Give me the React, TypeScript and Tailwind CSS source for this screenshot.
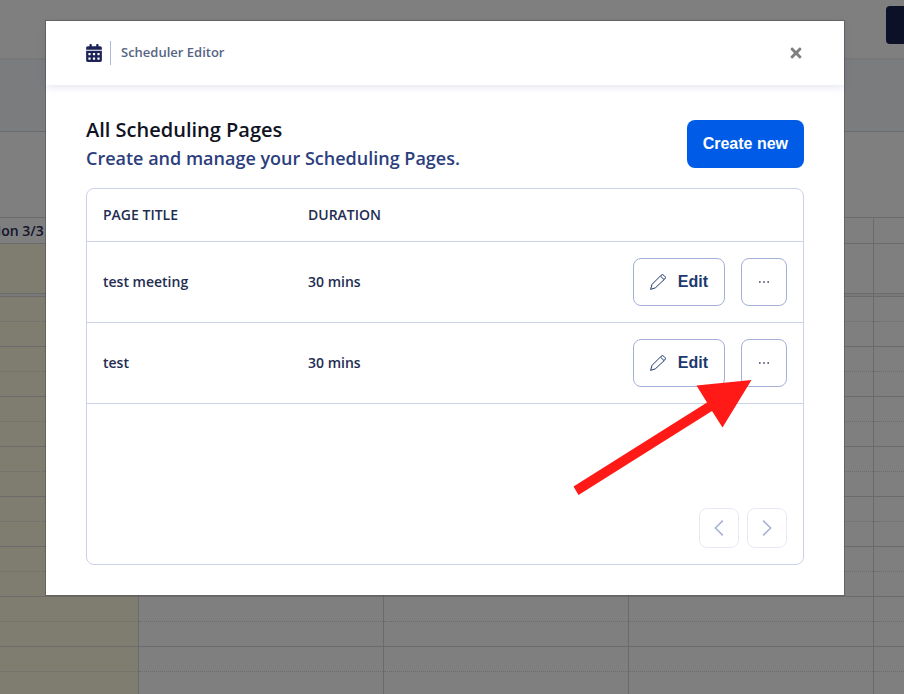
import { FaCalendarAlt, FaTimes } from 'react-icons/fa';

type SchedulingPage = {
  id: string;
  title: string;
  duration: string;
};

const pages: SchedulingPage[] = [
  { id: 'test-meeting', title: 'test meeting', duration: '30 mins' },
  { id: 'test', title: 'test', duration: '30 mins' },
];

const days = [
  { id: 'mon', label: 'Mon 3/3', isToday: true },
  { id: 'tue', label: '', isToday: false },
  { id: 'wed', label: '', isToday: false },
  { id: 'thu', label: '', isToday: false },
  { id: 'fri', label: '', isToday: false },
];

const hours = [8, 9, 10, 11, 12, 13, 14, 15, 16];

function PencilIcon() {
  return (
    <svg
      viewBox="0 0 16 16"
      className="size-4"
      fill="none"
      stroke="currentColor"
      strokeLinejoin="round"
      aria-hidden="true"
    >
      <path d="M11 1.4a2 2 0 0 1 2.900 0l.8.8a2 2 0 0 1 0 2.900L5.400 13.800.6 15.400l1.400-5z" />
      <path d="M10.400 2l3.700 3.700" />
    </svg>
  );
}

function ChevronIcon({ direction }: { direction: 'left' | 'right' }) {
  return (
    <svg
      viewBox="0 0 10 16"
      className="h-4 w-[10px]"
      fill="none"
      stroke="currentColor"
      strokeWidth="1.5"
      aria-hidden="true"
    >
      <path d={direction === 'left' ? 'M8.8.6 1.4 8l7.4 7.4' : 'M1.2.6 8.6 8l-7.4 7.4'} />
    </svg>
  );
}

function CalendarBackdrop() {
  return (
    <div className="flex h-full flex-col overflow-hidden bg-white" aria-hidden="true">
      <div className="flex h-[60px] shrink-0 justify-end border-b-2 border-[#f0f0f0] pt-[6px]">
        <div className="h-[38px] w-[18px] rounded-l bg-[#1a2250]" />
      </div>
      <div className="h-[72px] shrink-0 border-b border-[#d4d7de] bg-[#f7f9fc]" />
      <div className="h-[85px] shrink-0" />
      <div className="-ml-[107px] flex border-t border-[#d6d6d6]">
        {days.map((day) => (
          <div key={day.id} className="-mr-px w-[246px] shrink-0 border-x border-[#d6d6d6]">
            <div className="flex h-[26px] items-center justify-center border-b border-[#d6d6d6] text-sm font-semibold text-[#2a2c5c]">
              {day.label}
            </div>
            <div
              className={`h-[50px] border-b border-[#d6d6d6] ${day.isToday ? 'bg-[#fff9e0]' : ''}`}
            />
            <div className="h-[2px] bg-[#f2f2f2]" />
            {hours.map((hour) => (
              <div
                key={hour}
                className={`h-[50px] border-t border-[#d6d6d6] ${day.isToday ? 'bg-[#fffbe0]' : ''}`}
              >
                <div className="h-[25px] border-b border-dotted border-[#d6d6d6]" />
              </div>
            ))}
          </div>
        ))}
      </div>
    </div>
  );
}

function PageRow({ page }: { page: SchedulingPage }) {
  return (
    <tr className="border-b border-[#cbd2e8]">
      <td className="px-4">{page.title}</td>
      <td className="px-4">{page.duration}</td>
      <td className="p-4">
        <div className="flex justify-end gap-4 font-['Liberation_Sans',sans-serif]">
          <button
            type="button"
            className="flex h-12 items-center gap-3 rounded-lg border border-[#a6b0d6] px-4 text-base font-bold text-[#1d3a6e]"
          >
            <PencilIcon />
            Edit
          </button>
          <button
            type="button"
            aria-label={`More options for ${page.title}`}
            className="flex h-12 w-[46px] items-center justify-center rounded-lg border border-[#a6b0d6] text-[#3c4468]"
          >
            <svg viewBox="0 0 12 2" className="h-[2px] w-3" fill="currentColor" aria-hidden="true">
              <path d="M1 .2h1.600v1.600H1zM5.200.2h1.600v1.600H5.200zM9.400.2H11v1.600H9.400z" />
            </svg>
          </button>
        </div>
      </td>
    </tr>
  );
}

function PagerButton({ direction, label }: { direction: 'left' | 'right'; label: string }) {
  return (
    <button
      type="button"
      aria-label={label}
      className="flex size-10 items-center justify-center rounded-lg border border-[#e8e8f5] text-[#a6b0d6]"
    >
      <ChevronIcon direction={direction} />
    </button>
  );
}

function SchedulerDialog() {
  return (
    <section
      role="dialog"
      aria-labelledby="scheduler-heading"
      className="w-full bg-white ring-1 ring-black/20"
    >
      <header className="flex h-16 items-center justify-between px-10 shadow-[0_2px_8px_rgba(30,50,120,0.12)]">
        <div className="flex items-center text-[13px] font-semibold text-[#566484]">
          <FaCalendarAlt className="h-[18px] w-4 text-[#1c2457]" />
          <span className="ml-2 flex h-6 items-center border-l border-[#a9b9dc] pl-[10px]">
            Scheduler Editor
          </span>
        </div>
        <button type="button" aria-label="Close" className="text-[#808080]">
          <FaTimes className="size-4" />
        </button>
      </header>

      <div className="px-10 pt-[35px] pb-[30px]">
        <div className="flex items-start justify-between">
          <div>
            <h1
              id="scheduler-heading"
              className="text-xl leading-5 font-semibold text-[#101323]"
            >
              All Scheduling Pages
            </h1>
            <p className="mt-2 text-lg leading-5 font-semibold text-[#2c3e7c]">
              Create and manage your Scheduling Pages.
            </p>
          </div>
          <button
            type="button"
            className="h-12 rounded-lg bg-[#005ce6] px-4 font-['Liberation_Sans',sans-serif] text-base font-bold text-white"
          >
            Create new
          </button>
        </div>

        <div className="mt-5 rounded-lg border border-[#cbd2e8]">
          <table className="w-full text-left text-sm font-semibold text-[#232d52]">
            <thead>
              <tr className="h-[52px] border-b border-[#cbd2e8]">
                <th className="w-[205px] px-4 font-semibold">PAGE TITLE</th>
                <th className="px-4 font-semibold">DURATION</th>
                <th className="px-4" aria-label="Actions" />
              </tr>
            </thead>
            <tbody>
              {pages.map((page) => (
                <PageRow key={page.id} page={page} />
              ))}
            </tbody>
          </table>
          <div className="flex justify-end gap-2 px-4 pt-[104px] pb-4">
            <PagerButton direction="left" label="Previous page" />
            <PagerButton direction="right" label="Next page" />
          </div>
        </div>
      </div>
    </section>
  );
}

export default function App() {
  return (
    <main className="relative h-screen overflow-hidden font-['Open_Sans',sans-serif]">
      <CalendarBackdrop />
      <div className="absolute inset-0 bg-black/50 pt-[21px] pr-[60px] pl-[46px]">
        <div className="relative">
          <SchedulerDialog />
          <svg
            viewBox="0 0 180 120"
            className="pointer-events-none absolute top-[357px] right-[92px] h-[120px] w-[180px]"
            fill="#ff1a17"
            aria-hidden="true"
          >
            <path d="M179.500 2 150.500 49.500 140 33 6.500 117 1.500 108.500 135 24.500 124.500 7.500z" />
          </svg>
        </div>
      </div>
    </main>
  );
}
